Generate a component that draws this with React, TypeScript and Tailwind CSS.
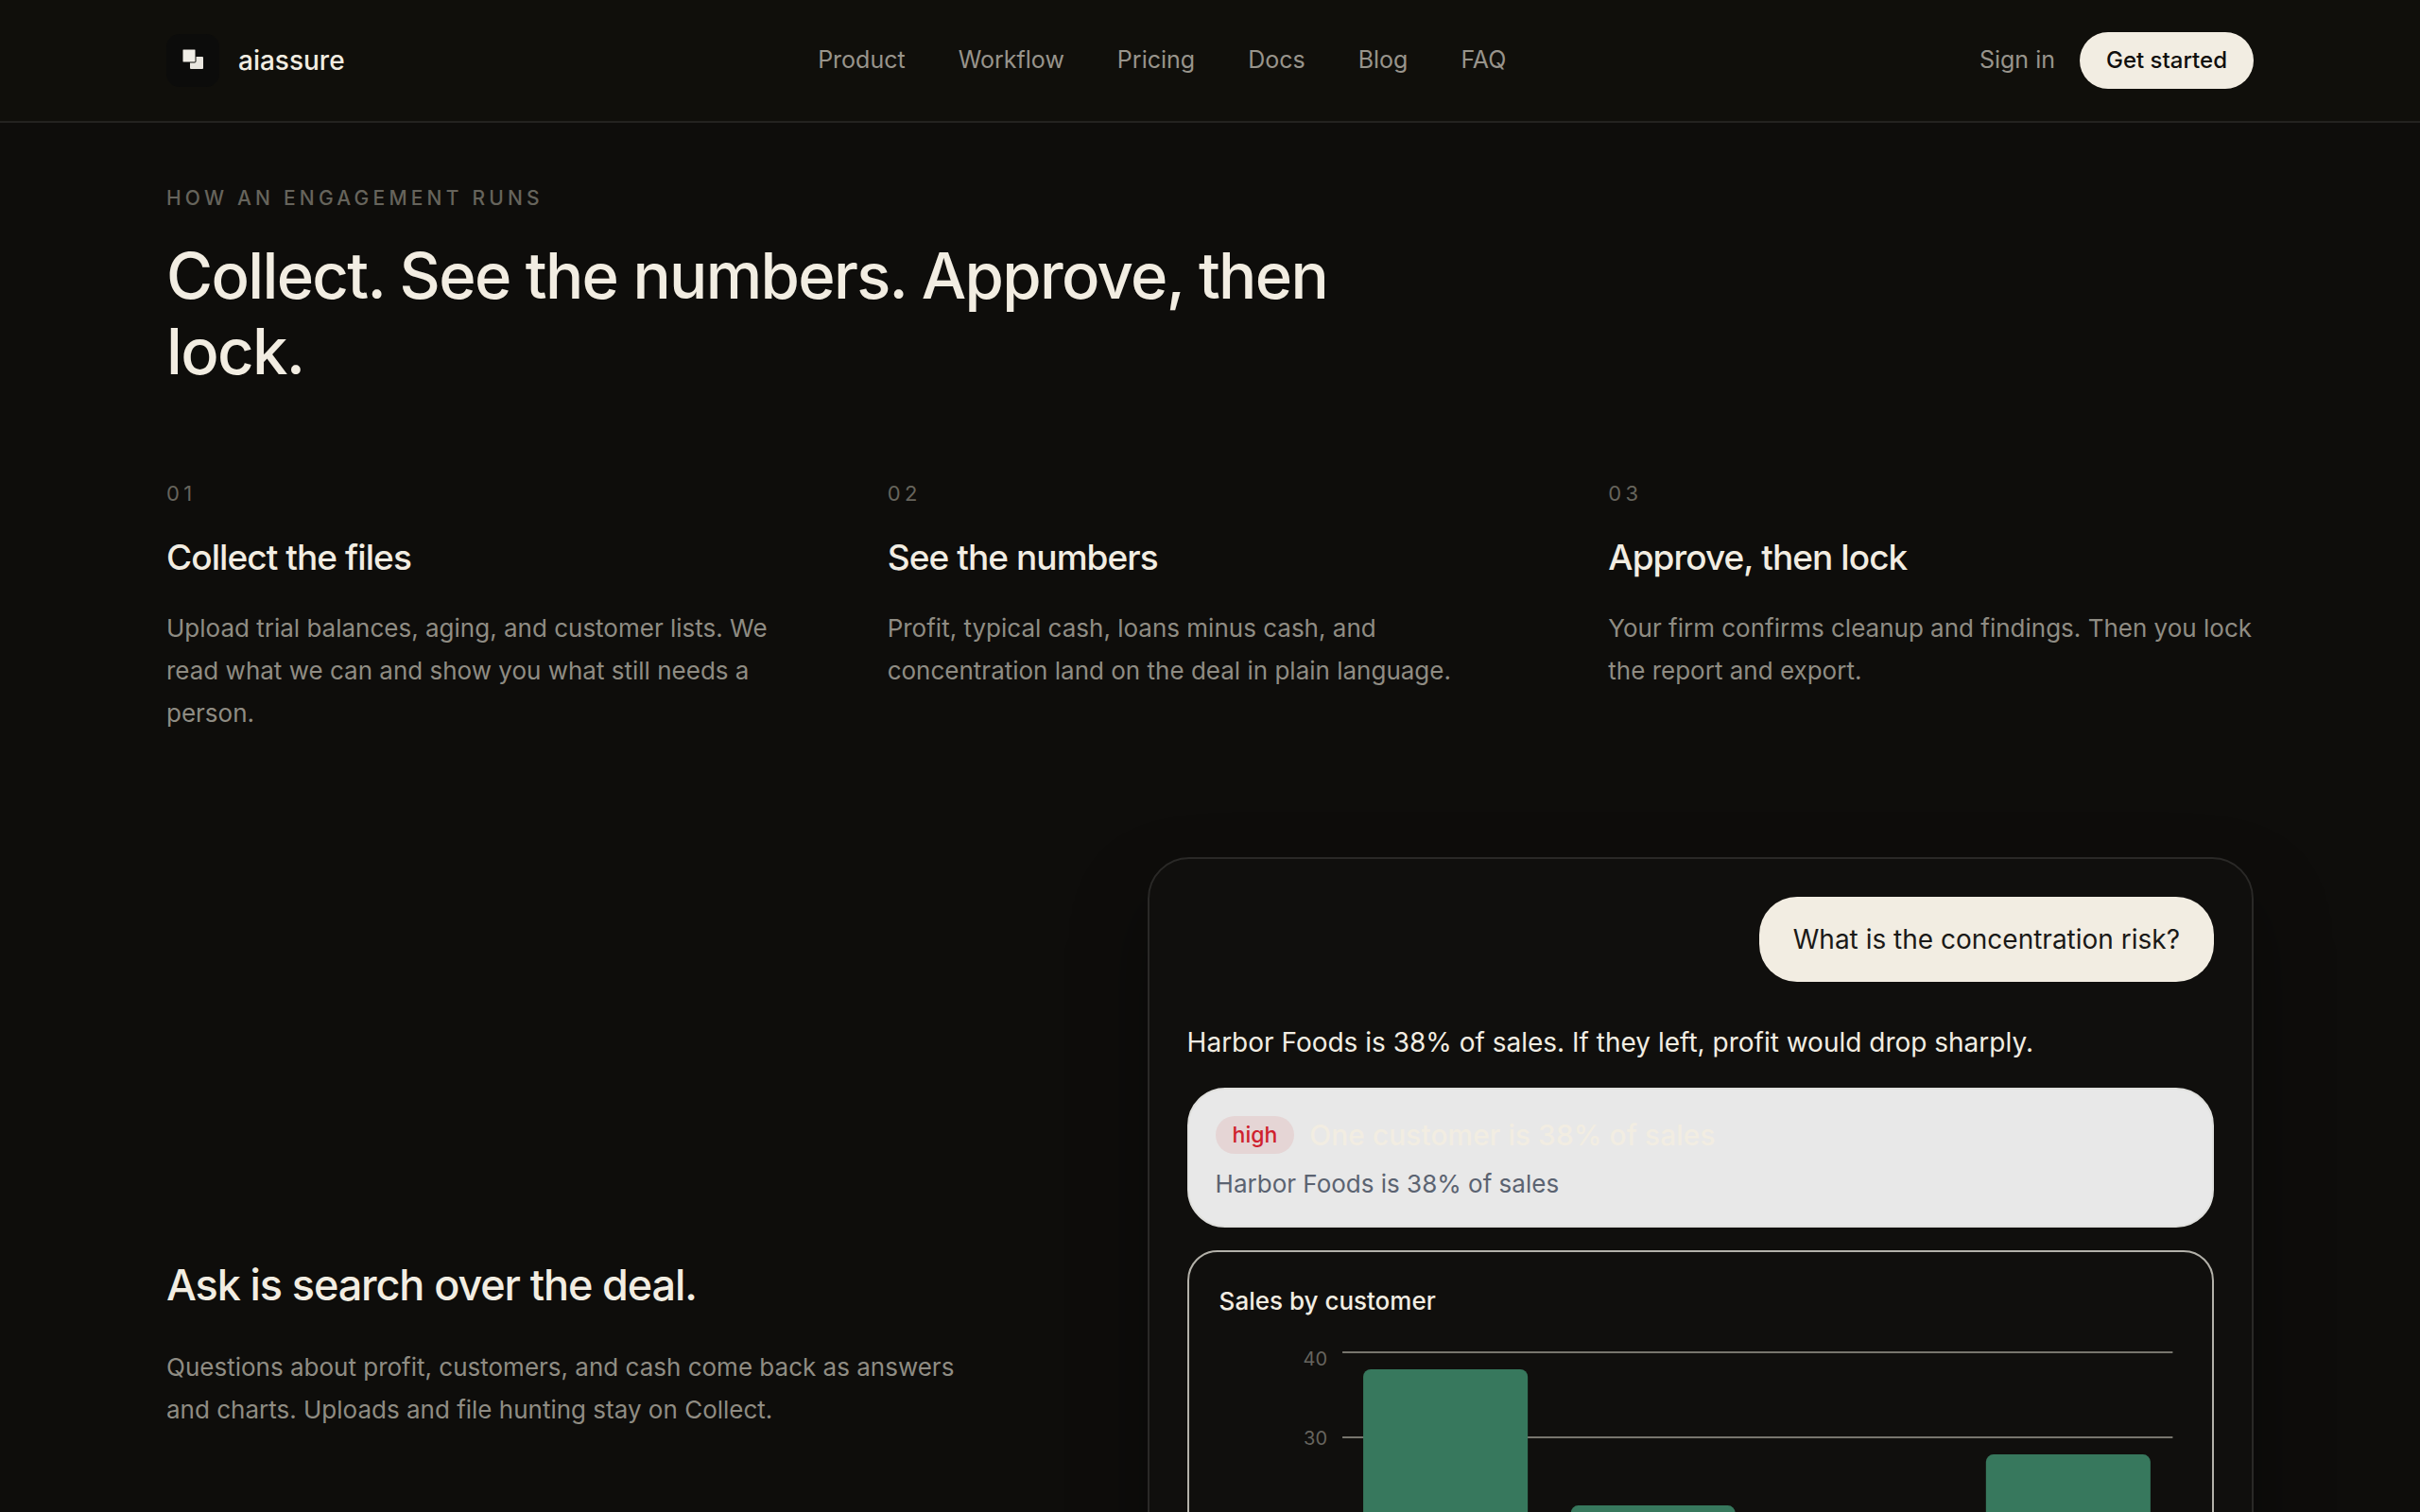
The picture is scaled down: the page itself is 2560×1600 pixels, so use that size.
const navLinks = ['Product', 'Workflow', 'Pricing', 'Docs', 'Blog', 'FAQ']

const steps = [
  {
    number: '01',
    title: 'Collect the files',
    description:
      'Upload trial balances, aging, and customer lists. We read what we can and show you what still needs a person.',
  },
  {
    number: '02',
    title: 'See the numbers',
    description: 'Profit, typical cash, loans minus cash, and concentration land on the deal in plain language.',
  },
  {
    number: '03',
    title: 'Approve, then lock',
    description: 'Your firm confirms cleanup and findings. Then you lock the report and export.',
  },
]

const sales = [38, 22, 12, 28]
const ticks = [40, 30, 20, 10, 0]

function Logo() {
  return (
    <svg className="size-14" viewBox="0 0 56 56" aria-hidden="true">
      <rect width="56" height="56" rx="14" fill="#0c0c0b" />
      <rect x="25" y="24" width="14" height="13" rx="1" fill="#e9e6df" />
      <rect x="17" y="16" width="14" height="14" rx="1" fill="#f0ede6" stroke="#0c0c0b" strokeWidth="1" />
    </svg>
  )
}

function Header() {
  return (
    <header className="sticky top-0 z-10 border-b-2 border-[#242320] bg-[#100f0b]">
      <div className="mx-auto flex h-32 max-w-[2304px] items-center justify-between px-12">
        <a href="#" className="flex items-center gap-5 text-[28px] font-medium">
          <Logo />
          aiassure
        </a>
        <nav className="flex items-center gap-14 text-[25px] text-[#98948b]">
          {navLinks.map((link) => (
            <a key={link} href={`#${link.toLowerCase()}`}>
              {link}
            </a>
          ))}
        </nav>
        <div className="flex items-center gap-[26px] text-2xl">
          <a href="#signin" className="text-[25px] text-[#98948b]">
            Sign in
          </a>
          <button type="button" className="h-[60px] rounded-full bg-[#f2ede2] px-7 font-medium text-[#100f0d]">
            Get started
          </button>
        </div>
      </div>
    </header>
  )
}

function SalesChart() {
  // 9 units per percentage point, baseline at 378
  const y = (value: number) => 378 - value * 9
  return (
    <svg className="mt-4 w-full" viewBox="0 0 1018 450" role="img" aria-label="Sales by customer">
      {ticks.map((tick) => (
        <g key={tick}>
          <line x1="130" x2="1008" y1={y(tick)} y2={y(tick)} stroke="#77756d" strokeWidth="2" />
          <text x="114" y={tick === 40 ? 32 : y(tick) + 8} textAnchor="end" fontSize="20" fill="#66645e">
            {tick}
          </text>
        </g>
      ))}
      {sales.map((value, idx) => (
        <path
          key={value}
          transform={`translate(${152 + idx * 219.5} ${y(value)})`}
          d={`M0 ${value * 9}V8a8 8 0 0 1 8-8h158a8 8 0 0 1 8 8V${value * 9}z`}
          fill="#37785d"
        />
      ))}
    </svg>
  )
}

function ChatCard() {
  return (
    <div className="rounded-[44px] border-2 border-[#2a2927] bg-[#100f0d] p-10 text-[28px] shadow-[0_40px_80px_rgba(0,0,0,0.35)]">
      <div className="flex justify-end">
        <p className="rounded-[40px] bg-[#f2ede2] px-9 py-5 leading-[50px] text-[#1a1917]">
          What is the concentration risk?
        </p>
      </div>
      <p className="mt-10 leading-[48px]">Harbor Foods is 38% of sales. If they left, profit would drop sharply.</p>

      <div className="mt-6 rounded-[40px] border-2 border-[#e0e0dd] bg-[#e8e8e8] px-7 pt-7 pb-6">
        <div className="flex items-center gap-4">
          <span className="rounded-full bg-[#e5d5d5] px-[18px] text-[23px] leading-10 font-medium text-[#cf222e]">
            high
          </span>
          <span className="text-3xl leading-10 font-medium">One customer is 38% of sales</span>
        </div>
        <p className="mt-3 text-[26px] leading-10 text-[#5b6371]">Harbor Foods is 38% of sales</p>
      </div>

      <div className="mt-6 rounded-4xl border-2 border-[#b3b1a9] p-8">
        <h4 className="text-[26px] leading-10 font-medium">Sales by customer</h4>
        <SalesChart />
      </div>
    </div>
  )
}

export default function App() {
  return (
    <div className="h-screen overflow-y-auto bg-[#0e0d0b] font-['Inter','Liberation_Sans',sans-serif] text-[#f2ede2] [scrollbar-width:none]">
      <Header />
      <main className="mx-auto max-w-[2304px] px-12 pt-16 pb-32">
        <section id="workflow">
          <p className="text-[21px] leading-8 font-medium tracking-[0.2em] text-[#66645c] uppercase">
            How an engagement runs
          </p>
          <h2 className="mt-[26px] max-w-[1344px] text-[67px] leading-20 font-medium tracking-tight">
            Collect. See the numbers. Approve, then lock.
          </h2>
          <div className="mt-[94px] grid grid-cols-3 gap-20">
            {steps.map((step) => (
              <div key={step.number}>
                <p className="text-[22px] leading-8 tracking-[0.2em] text-[#66645c]">{step.number}</p>
                <h3 className="mt-7 text-[37px] leading-12 font-medium tracking-tight">{step.title}</h3>
                <p className="mt-7 text-[26px] leading-[45px] text-[#8f8c83]">{step.description}</p>
              </div>
            ))}
          </div>
        </section>

        {/* Ask */}
        <section id="product" className="mt-[130px] grid grid-cols-[0.9fr_1.1fr] items-center gap-20">
          <div>
            <h3 className="text-[45px] leading-14 font-medium tracking-tight">Ask is search over the deal.</h3>
            <p className="mt-9 max-w-[880px] text-[26px] leading-[45px] text-[#8f8c83]">
              Questions about profit, customers, and cash come back as answers and charts. Uploads and file hunting
              stay on Collect.
            </p>
          </div>
          <ChatCard />
        </section>
      </main>
    </div>
  )
}
